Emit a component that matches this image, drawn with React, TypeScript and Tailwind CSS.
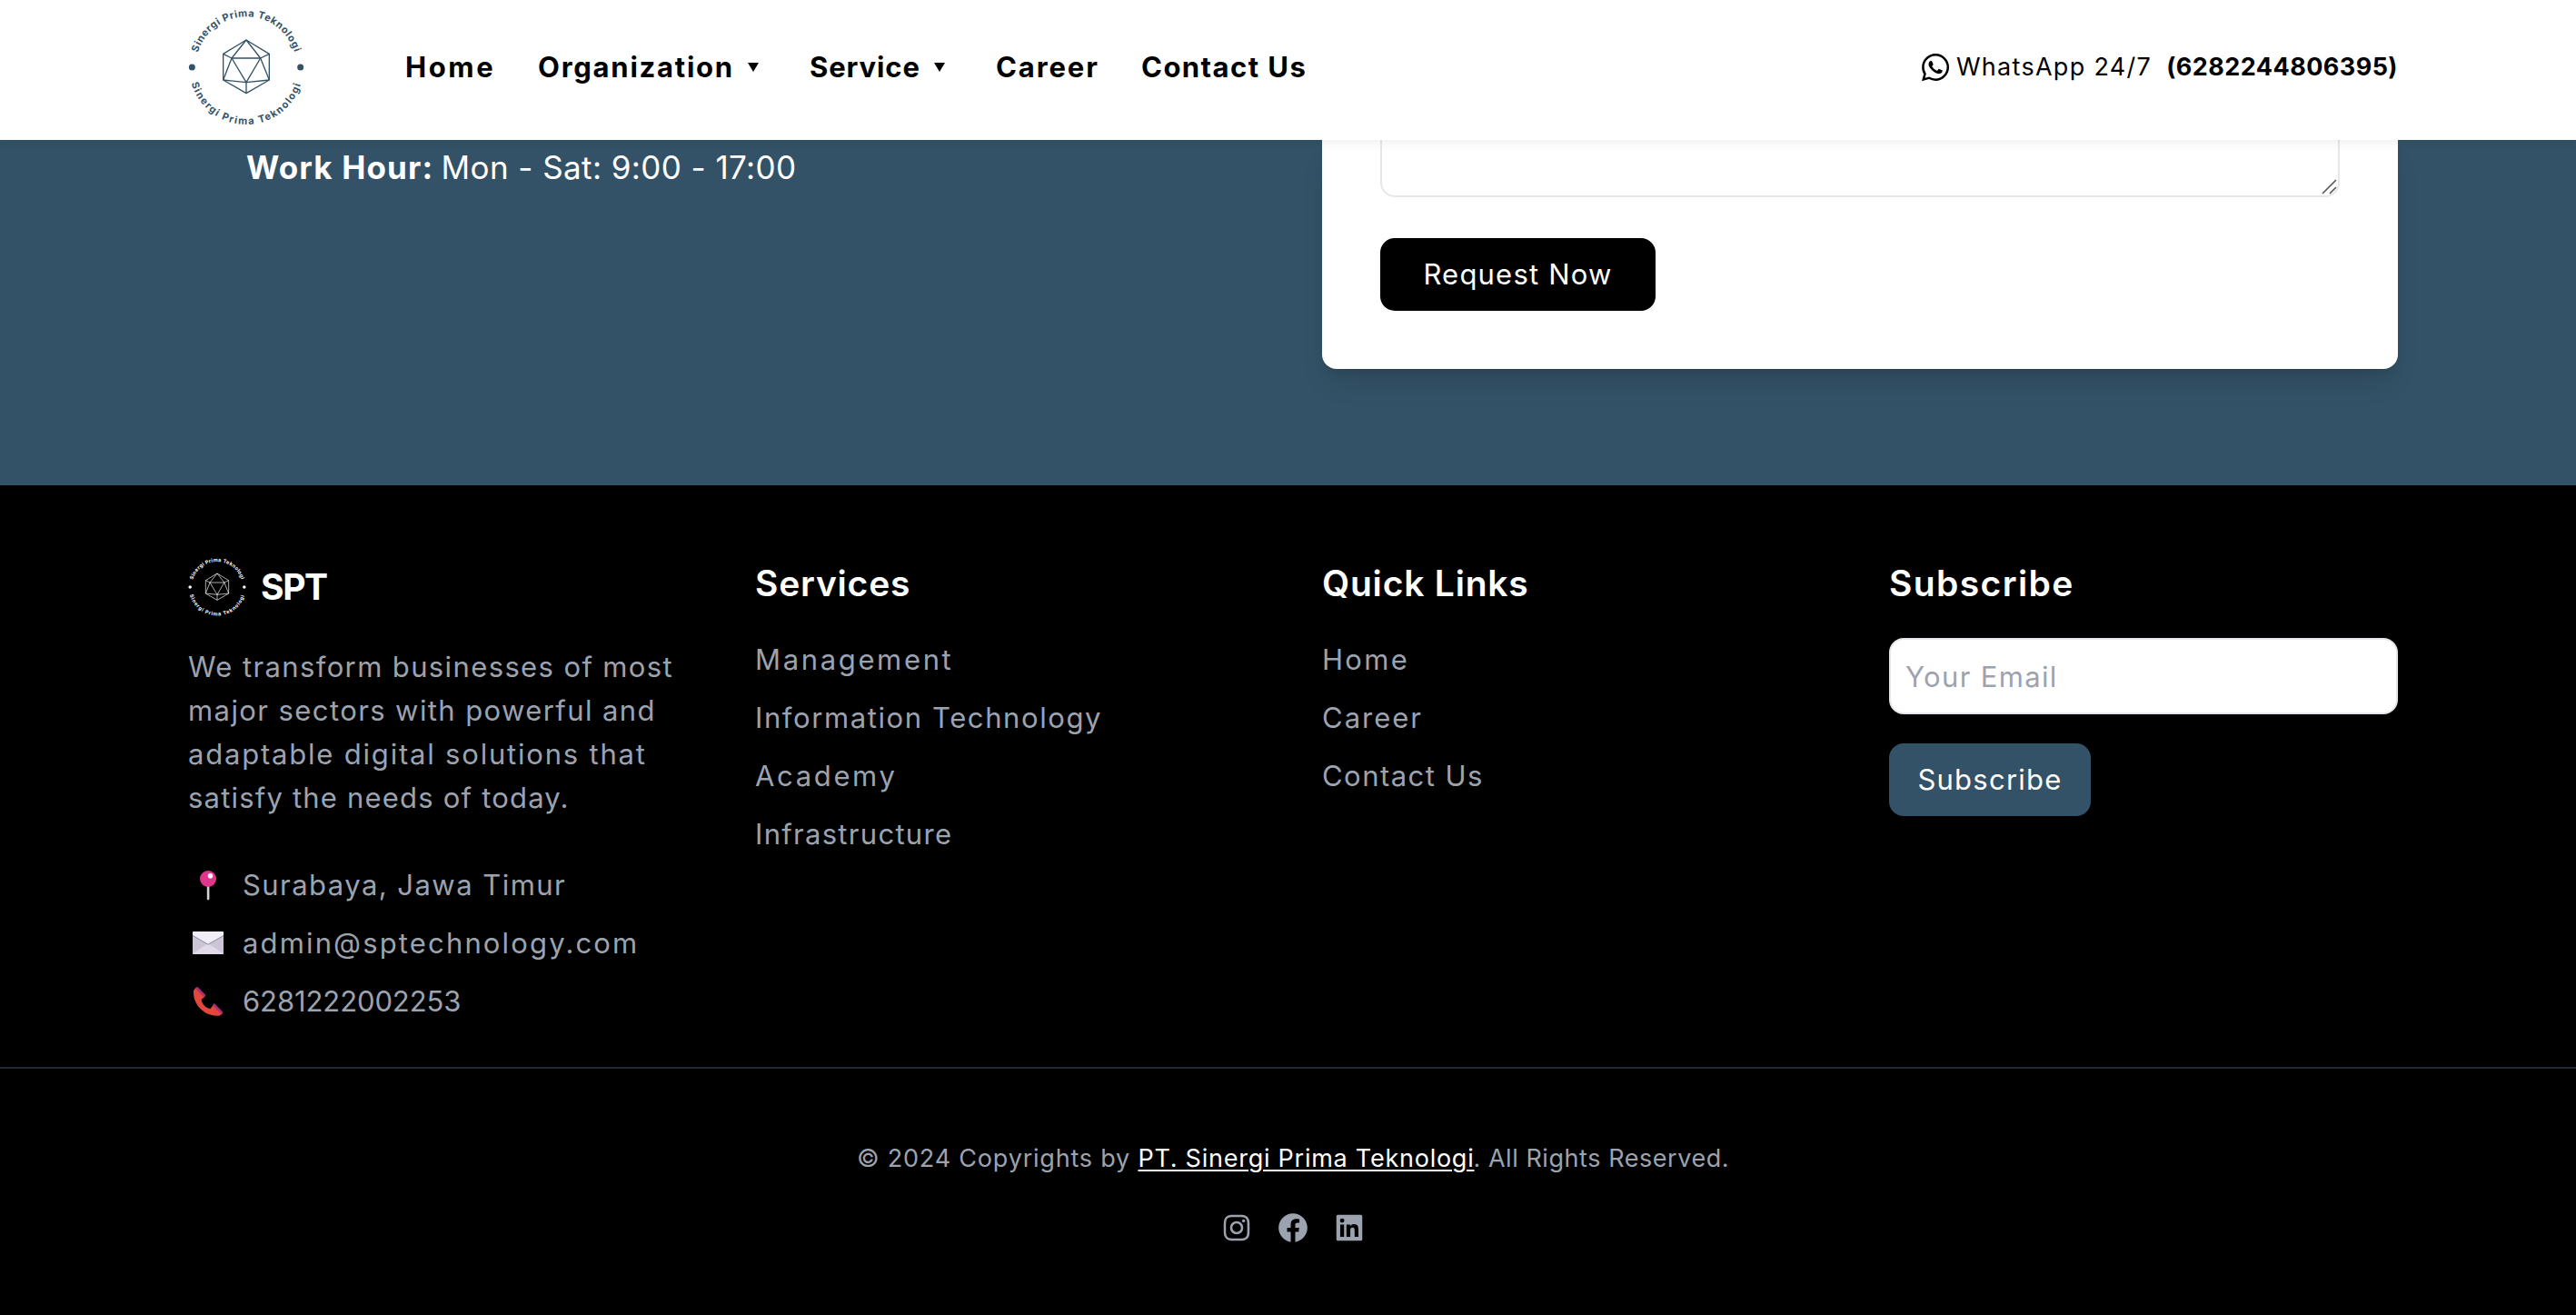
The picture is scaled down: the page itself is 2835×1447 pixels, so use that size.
import React, { useId } from "react";
import {
  BiLogoFacebookCircle,
  BiLogoInstagram,
  BiLogoLinkedinSquare,
  BiLogoWhatsapp,
} from "react-icons/bi";

function Logo({ className }: { className: string }) {
  const id = useId();
  return (
    <svg viewBox="51 32 384 384" className={`overflow-visible ${className}`} fill="none" stroke="currentColor" strokeWidth="4" strokeLinejoin="round">
      <defs>
        <path id={id + "t"} d="M76 224 A167 167 0 0 1 410 224" />
        <path id={id + "b"} d="M54 224 A189 189 0 0 0 432 224" />
      </defs>
      <path d="M243 134 319 180V266L243 310 167 266V180Z" />
      <path d="M195 194H290L243 274Z" />
      <path d="M243 134 195 194M243 134 290 194M167 180 195 194M319 180 290 194M167 266 195 194M319 266 290 194M167 266 243 274M319 266 243 274M243 310V274" />
      <g fill="currentColor" stroke="none" fontFamily="Inter, sans-serif" fontWeight="700" fontSize="33" textAnchor="middle">
        <circle cx="64" cy="224" r="10.5" />
        <circle cx="422" cy="224" r="10.5" />
        <text letterSpacing="2">
          <textPath href={"#" + id + "t"} startOffset="50%">Sinergi Prima Teknologi</textPath>
        </text>
        <text letterSpacing="4.6">
          <textPath href={"#" + id + "b"} startOffset="50%">Sinergi Prima Teknologi</textPath>
        </text>
      </g>
    </svg>
  );
}

function Arrow() {
  return (
    <svg viewBox="0 0 12 10" className="ml-[15px] h-[10px] w-3">
      <path d="M0 0H12L6 10Z" fill="currentColor" />
    </svg>
  );
}

const nav = [
  { label: "Home", cls: "w-[146px] tracking-[2.6px]" },
  { label: "Organization", cls: "w-[299px] tracking-[1.75px]", menu: true },
  { label: "Service", cls: "w-[205px] tracking-[0.9px]", menu: true },
  { label: "Career", cls: "w-[160px] tracking-[1.9px]" },
  { label: "Contact Us", cls: "tracking-[1.45px]" },
];

function Header() {
  return (
    <header className="relative z-10 h-[154px] bg-white pb-[6px] shadow-[0_4px_10px_rgba(0,0,0,0.06)]">
      <div className="ml-[207px] flex h-full w-[2432px] items-center">
        <Logo className="size-32 text-[#335267]" />
        <nav className="ml-[111px] flex text-[31px] leading-[48px] font-bold text-black">
          {nav.map((n) => (
            <a key={n.label} className={`flex items-center whitespace-nowrap ${n.cls}`}>
              {n.label}
              {n.menu && <Arrow />}
            </a>
          ))}
        </nav>
        <div className="ml-auto flex items-center text-[27px] leading-10 whitespace-nowrap text-black">
          <BiLogoWhatsapp className="mr-[3px] size-10" />
          <span className="tracking-[1.3px]">WhatsApp 24/7</span>
          <span className="ml-4 font-bold tracking-[0.45px]">(6282244806395)</span>
        </div>
      </div>
    </header>
  );
}

function Contact() {
  return (
    <section className="h-[380px] bg-[#335267]">
      <div className="ml-[207px] flex w-[2432px] justify-between">
        <p className="mt-[2px] pl-16 text-[35px] leading-[56px] text-white">
          <strong className="tracking-[1.15px]">Work Hour:</strong>
          <span className="-ml-[2px] tracking-[0.42px]"> Mon - Sat: 9:00 - 17:00</span>
        </p>
        <form className="h-[252px] w-[1184px] rounded-b-2xl bg-white px-16 shadow-[0_20px_30px_-6px_rgba(0,0,0,0.1),0_8px_12px_-4px_rgba(0,0,0,0.1)]">
          <div className="flex h-[63px] items-end justify-end rounded-b-2xl border-2 border-t-0 border-[#e5e7eb]">
            <svg viewBox="0 0 18 18" className="size-[18px]" stroke="#555" strokeWidth="1.6">
              <path d="M1 16 16 1M9 16 16 9" />
            </svg>
          </div>
          <button type="button" className="mt-[45px] h-20 w-[303px] rounded-2xl bg-black text-[31px] tracking-[1.2px] text-white">
            Request Now
          </button>
        </form>
      </div>
    </section>
  );
}

function Pin() {
  return (
    <svg viewBox="0 0 44 48" className="h-12 w-11">
      <rect x="20.8" y="24" width="2.6" height="16.4" rx="1.3" fill="#d3d1d6" />
      <circle cx="22" cy="17" r="9" fill="#e1358c" />
      <circle cx="24.5" cy="13.7" r="2.8" fill="#fff" />
    </svg>
  );
}

function Envelope() {
  return (
    <svg viewBox="0 0 44 48" className="h-12 w-11">
      <rect x="5" y="11" width="34" height="25" rx="1.2" fill="#cbc5d6" />
      <path d="M5 35.5 22 24 39 35.5Q39 36 38 36H6Q5 36 5 35.5Z" fill="#e0dae9" />
      <path d="M5 15V12Q5 11 6 11H38Q39 11 39 12V15L22 25Z" fill="#f2eef8" />
      <path d="M5 15.5 22 25.3 39 15.5" fill="none" stroke="#948d9f" strokeWidth="1" />
    </svg>
  );
}

function Phone() {
  return (
    <svg viewBox="0 0 44 48" className="h-12 w-11">
      <path d="M6 12 8.3 9 18 19 14.5 22C15.5 27 19 31 24.5 32L28 27.5 37.5 37.5 35 39.5C21 41.5 5 30 6 12Z" fill="#e4463b" />
      <path d="M8 9.3Q9.5 7.2 11 8.6L19 16.6Q20 18 17.8 19.6ZM27.2 28.4Q28 25.4 29.6 26.8L37.4 34.8Q39 36.4 36.8 38.2Z" fill="#ab2f78" />
    </svg>
  );
}

const services = [
  ["Management", "tracking-[2.65px]"],
  ["Information Technology", "tracking-[1.6px]"],
  ["Academy", "tracking-[2.65px]"],
  ["Infrastructure", "tracking-[1.3px]"],
];
const links = [
  ["Home", "tracking-[2.3px]"],
  ["Career", "tracking-[2px]"],
  ["Contact Us", "tracking-[1.45px]"],
];

function LinkList({ title, cls, items }: { title: string; cls: string; items: string[][] }) {
  return (
    <div>
      <h3 className={`text-[39px] leading-[56px] font-semibold text-white ${cls}`}>{title}</h3>
      <ul className="mt-8 flex flex-col gap-4">
        {items.map(([t, c]) => (
          <li key={t} className={c}>{t}</li>
        ))}
      </ul>
    </div>
  );
}

function Footer() {
  return (
    <footer className="h-[913px] bg-black pt-20 text-[31px] leading-[48px] text-[#9ca3af]">
      <div className="ml-[207px] grid w-[2432px] grid-cols-4 gap-16 pb-12">
        <div className="whitespace-nowrap">
          <div className="flex items-center gap-4">
            <Logo className="size-16 text-white" />
            <span className="text-[39px] font-bold tracking-[-1.4px] text-white">SPT</span>
          </div>
          <p className="mt-8">
            <span className="block tracking-[1.38px]">We transform businesses of most</span>
            <span className="block tracking-[1.41px]">major sectors with powerful and</span>
            <span className="block tracking-[1.8px]">adaptable digital solutions that</span>
            <span className="block tracking-[1.2px]">satisfy the needs of today.</span>
          </p>
          <ul className="mt-12 flex flex-col gap-4">
            <li className="flex gap-4 tracking-[1.45px]"><Pin />Surabaya, Jawa Timur</li>
            <li className="flex gap-4 tracking-[2.15px]"><Envelope />admin@sptechnology.com</li>
            <li className="flex gap-4 tracking-[-0.1px]"><Phone />6281222002253</li>
          </ul>
        </div>
        <LinkList title="Services" cls="tracking-[0.8px]" items={services} />
        <LinkList title="Quick Links" cls="tracking-[0.8px]" items={links} />
        <div>
          <h3 className="text-[39px] leading-[56px] font-semibold tracking-[1.4px] text-white">Subscribe</h3>
          <input
            placeholder="Your Email"
            className="mt-8 block h-[84px] w-full rounded-2xl border-2 border-[#e5e7eb] bg-white px-4 tracking-[1.35px] placeholder:text-[#9ca3af]"
          />
          <button type="button" className="mt-8 block h-20 w-[222px] rounded-2xl bg-[#335267] tracking-[1.25px] text-white">
            Subscribe
          </button>
        </div>
      </div>
      <div className="border-t-2 border-[#1f2937] pt-[79px]">
        <div className="ml-[207px] flex w-[2432px] flex-col items-center">
          <p className="text-[27px] leading-10 whitespace-pre">
            <span className="tracking-[0.8px]">© 2024 Copyrights by </span>
            <a className="tracking-[0.75px] text-white underline decoration-2 underline-offset-[3px]">PT. Sinergi Prima Teknologi</a>
            <span className="-ml-px tracking-[0.55px]">. All Rights Reserved.</span>
          </p>
          <div className="mt-[37px] flex gap-6">
            <BiLogoInstagram className="size-[38px]" />
            <BiLogoFacebookCircle className="size-[38px]" />
            <BiLogoLinkedinSquare className="size-[38px]" />
          </div>
        </div>
      </div>
    </footer>
  );
}

export default function App() {
  return (
    <div className="h-[1447px] w-full overflow-hidden bg-black font-[Inter,sans-serif]">
      <Header />
      <Contact />
      <Footer />
    </div>
  );
}
